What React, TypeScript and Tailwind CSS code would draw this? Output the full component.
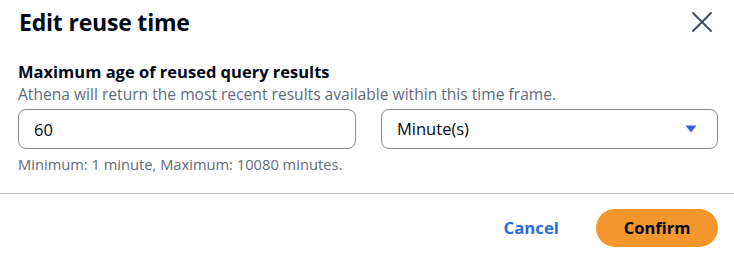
import { useState } from "react";

function CloseIcon() {
  return (
    <svg width="22" height="22" viewBox="0 0 22 22" fill="none">
      <path
        d="M2 2L20 20M20 2L2 20"
        stroke="#414d5c"
        strokeWidth="2"
        strokeLinecap="round"
      />
    </svg>
  );
}

function CaretDown() {
  return (
    <svg width="12" height="8" viewBox="0 0 12 8">
      <path d="M0.5 0.5H11.5L6 7.5Z" fill="#2a6be0" />
    </svg>
  );
}

export default function App() {
  const [minutes, setMinutes] = useState("60");

  return (
    <div
      className="flex h-[257px] w-[734px] flex-col bg-white text-[#000716]"
      style={{ fontFamily: '"Open Sans", "Noto Sans", sans-serif' }}
    >
      <div className="flex items-start justify-between pl-[19px] pr-[21px] pt-[6px]">
        <h1 className="text-[23px] font-bold leading-[32px] tracking-[-0.2px]">
          Edit reuse time
        </h1>
        <button className="mt-[5px] p-0" aria-label="Close">
          <CloseIcon />
        </button>
      </div>

      <div className="px-[18px] pt-[23px]">
        <div className="text-[16.5px] font-bold leading-[22px]">
          Maximum age of reused query results
        </div>
        <div className="mt-[1px] text-[15.6px] leading-[20px] text-[#5f6b7a]">
          Athena will return the most recent results available within this time frame.
        </div>

        <div className="mt-[5px] grid grid-cols-[338px_337px] gap-[25px]">
          <input
            value={minutes}
            onChange={(e) => setMinutes(e.target.value)}
            className="h-[40px] rounded-[8px] border border-[#8c8c94] px-[15px] text-[16.5px] text-[#000716] outline-none"
          />
          <div className="flex h-[40px] items-center justify-between rounded-[8px] border border-[#8c8c94] pl-[15px] pr-[20px] text-[16.5px]">
            <span>Minute(s)</span>
            <CaretDown />
          </div>
        </div>

        <div className="mt-[5px] text-[14.7px] leading-[20px] text-[#5f6b7a]">
          Minimum: 1 minute, Maximum: 10080 minutes.
        </div>
      </div>

      <div className="mt-[19px] border-t border-[#c6c6cd]" />

      <div className="flex items-center justify-end gap-[37px] pr-[16px] pt-[15px]">
        <button className="text-[16.8px] font-bold text-[#2a6be0]">Cancel</button>
        <button className="h-[38px] w-[122px] rounded-full bg-[#f2962d] text-[16.5px] font-bold text-[#000716]">
          Confirm
        </button>
      </div>
    </div>
  );
}
